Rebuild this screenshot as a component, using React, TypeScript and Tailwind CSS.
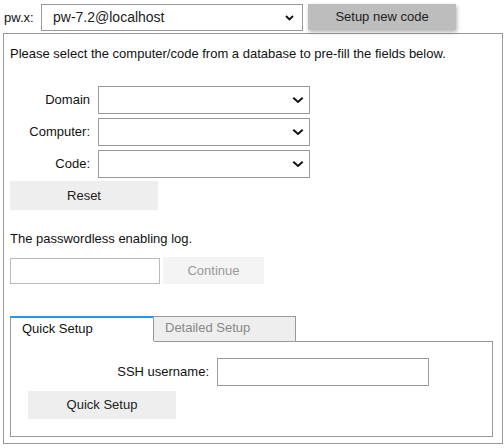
import React from 'react';

const Chevron: React.FC<{ small?: boolean }> = ({ small }) =>
  small ? (
    <svg className="pointer-events-none absolute right-[8px] top-1/2 -translate-y-1/2" width="9" height="6" viewBox="0 0 9 6">
      <path d="M1 1 L4.5 4.5 L8 1" fill="none" stroke="#111" strokeWidth="1.8" />
    </svg>
  ) : (
    <svg className="pointer-events-none absolute right-[5px] top-1/2 -translate-y-1/2" width="12" height="7" viewBox="0 0 12 7">
      <path d="M1.3 1.2 L6 5.4 L10.7 1.2" fill="none" stroke="#111" strokeWidth="2" />
    </svg>
  );

const Select: React.FC<{ value?: string; className: string; small?: boolean }> = ({ value, className, small }) => (
  <div className={`relative border border-[#999] bg-white ${className}`}>
    <div className="pl-[11px] h-full flex items-center text-[14px] text-[#222]">{value}</div>
    <Chevron small={small} />
  </div>
);

export default function App() {
  const rows = ['Domain', 'Computer:', 'Code:'];
  return (
    <div className="w-[504px] h-[448px] bg-white text-[13px] text-[#111]" style={{ fontFamily: '"Liberation Sans", Arial, sans-serif' }}>
      {/* Top bar */}
      <div className="flex items-start pt-[4px] pl-[4px]">
        <span className="w-[37px] h-[27px] flex items-center text-[13px]">pw.x:</span>
        <Select value="pw-7.2@localhost" className="w-[262px] h-[27px]" small />
        <button className="ml-[5px] w-[148px] h-[26px] bg-[#bdbdbd] text-[13px] text-[#222] shadow-[1px_2px_4px_rgba(0,0,0,0.3)]">
          Setup new code
        </button>
      </div>

      {/* Main panel */}
      <div className="mt-[2px] ml-[3px] w-[500px] h-[411px] border border-[#999] pl-[6px] pr-[9px] pt-[12px]">
        <p className="leading-[16px]">Please select the computer/code from a database to pre-fill the fields below.</p>

        <div className="mt-[24px] flex flex-col gap-[4px]">
          {rows.map((r) => (
            <div key={r} className="flex items-center">
              <span className="w-[80px] text-right">{r}</span>
              <Select className="ml-[8px] w-[212px] h-[28px]" />
            </div>
          ))}
        </div>
        <button className="mt-[3px] w-[148px] h-[29px] bg-[#eeeeee] text-[#222]">Reset</button>

        <p className="mt-[21px] leading-[16px]">The passwordless enabling log.</p>
        <div className="mt-[11px] flex items-start">
          <input className="w-[150px] h-[26px] border border-[#bbb] outline-none" />
          <button className="ml-[3px] w-[101px] h-[27px] -mt-[1px] bg-[#f4f4f4] text-[#999]">Continue</button>
        </div>

        {/* Tabs */}
        <div className="mt-[32px]">
          <div className="flex h-[25px]">
            <div className="w-[143px] border-t-2 border-t-[#2196f3] border-l border-l-[#999] pl-[11px] pt-[3px] leading-[16px]">Quick Setup</div>
            <div className="w-[143px] border border-[#999] border-b-0 bg-[#eeeeee] pl-[11px] pt-[3px] leading-[16px] text-[#888]">Detailed Setup</div>
          </div>
          <div className="relative h-[96px] border border-[#999] border-t-0">
            <div className="absolute left-[143px] right-0 top-0 border-t border-[#999]" />
            <div className="flex items-center pt-[17px]">
              <span className="w-[198px] text-right">SSH username:</span>
              <input className="ml-[8px] w-[212px] h-[28px] border border-[#999] outline-none" />
            </div>
            <button className="mt-[5px] ml-[17px] w-[148px] h-[28px] bg-[#eeeeee] text-[#222]">Quick Setup</button>
          </div>
        </div>
      </div>
    </div>
  );
}
